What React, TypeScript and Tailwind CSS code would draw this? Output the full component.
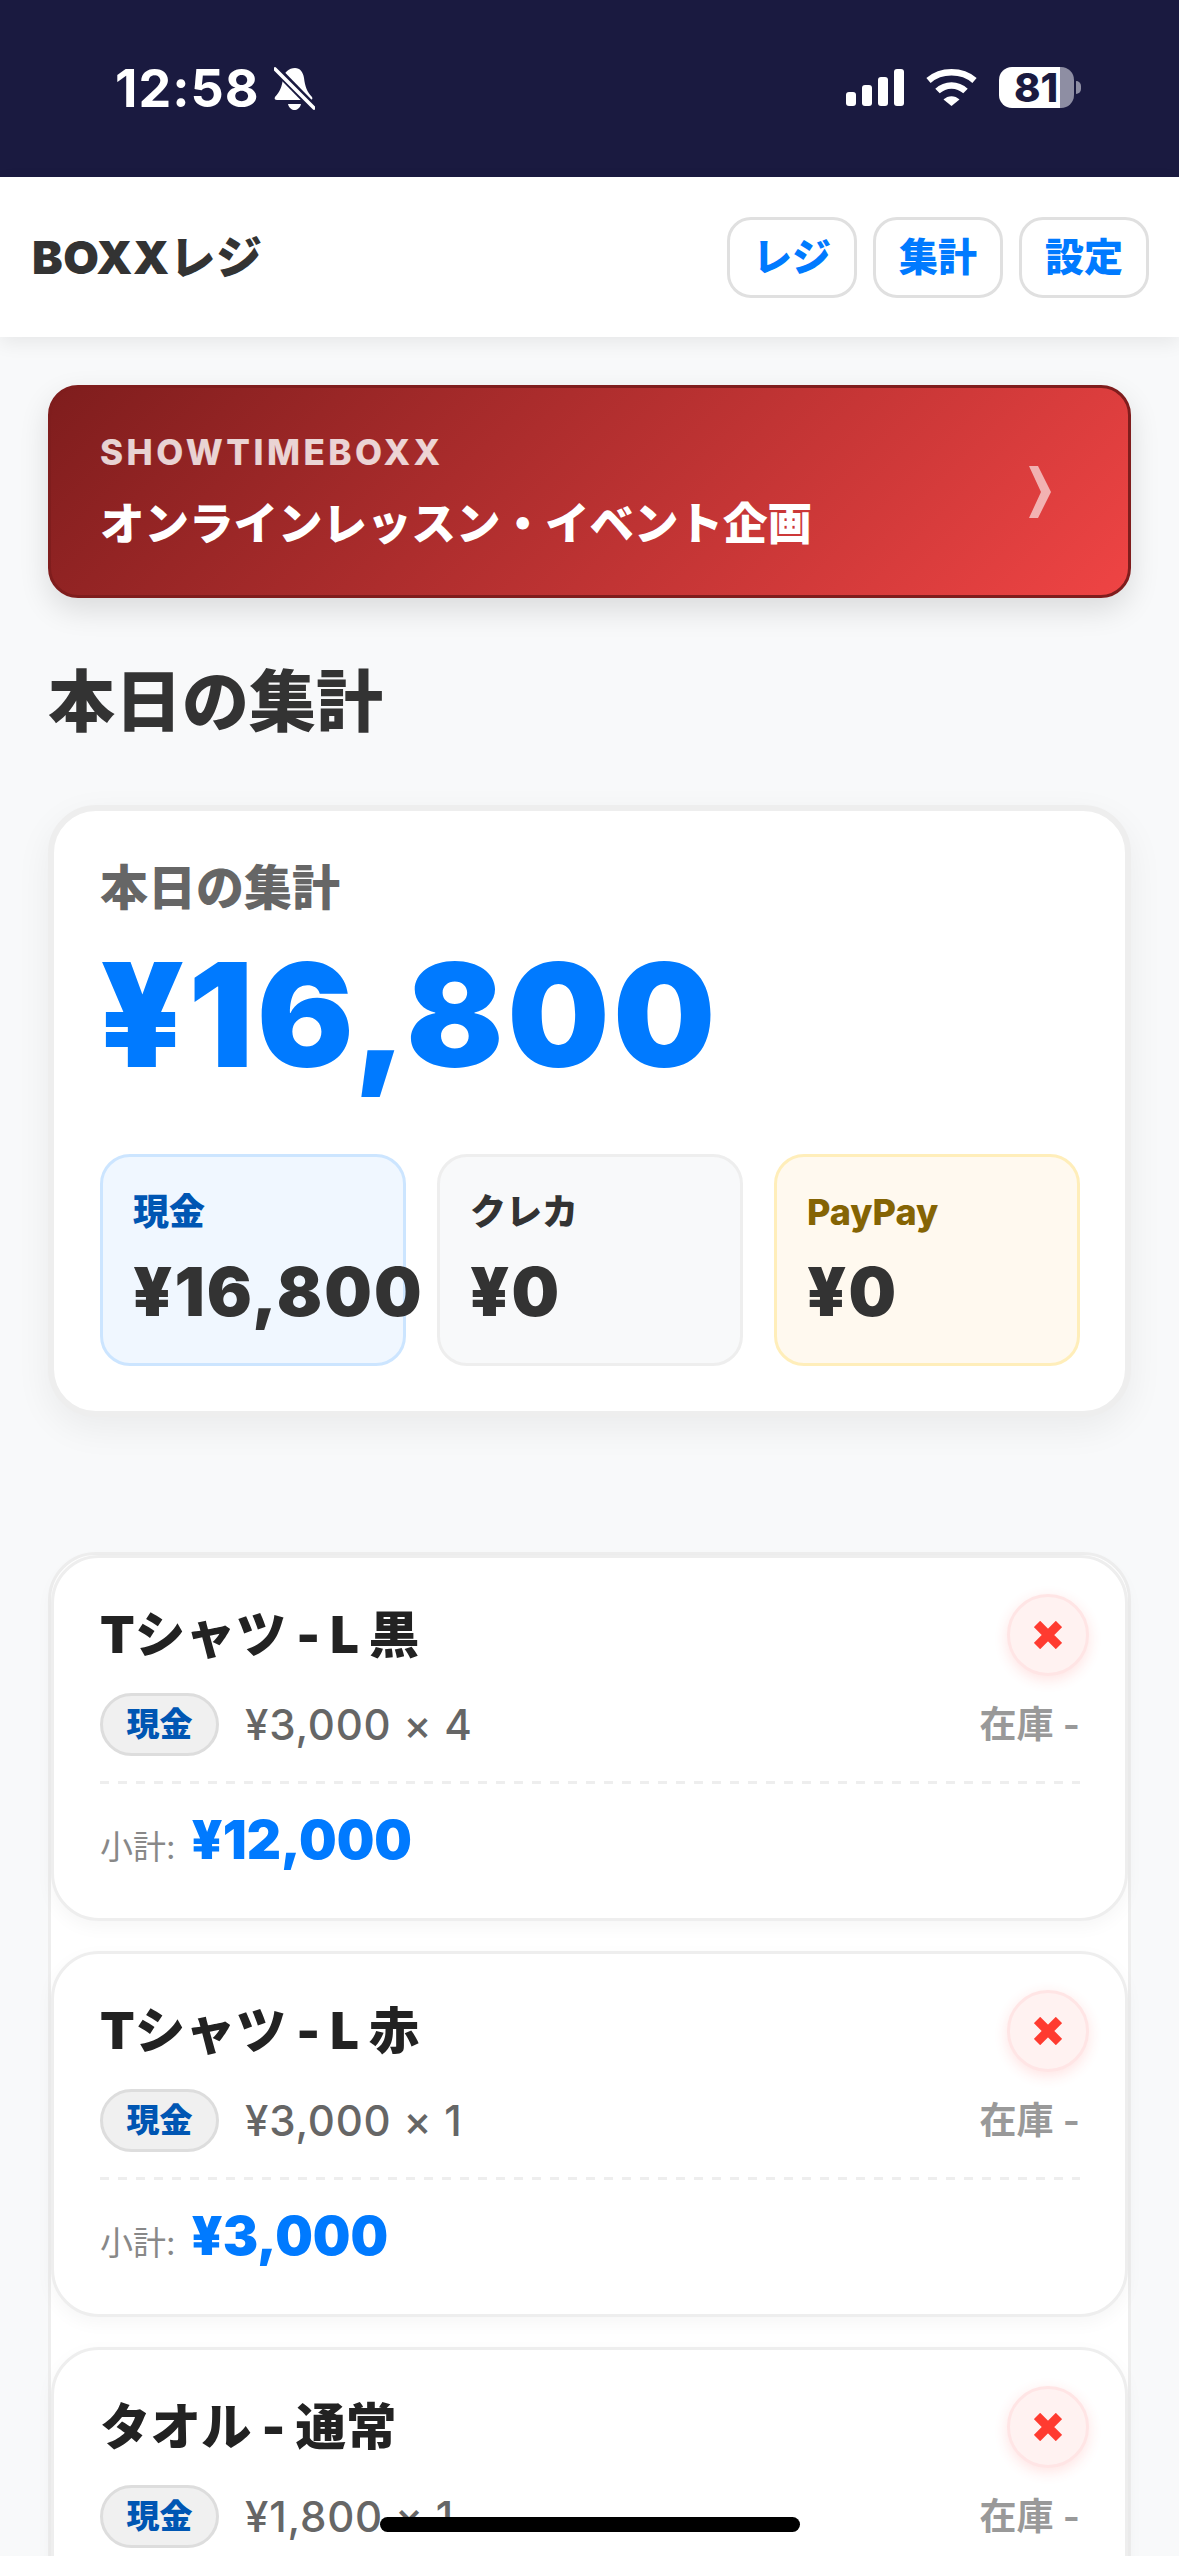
const sales = [
  { id: 1, name: 'Tシャツ - L 黒', detail: '¥3,000 × 4', subtotal: '¥12,000' },
  { id: 2, name: 'Tシャツ - L 赤', detail: '¥3,000 × 1', subtotal: '¥3,000' },
  { id: 3, name: 'タオル - 通常', detail: '¥1,800 × 1', subtotal: '¥1,800' },
];

function BellSlash() {
  return (
    <svg width="41" height="43" viewBox="0 0 41 43" fill="#fff">
      <path d="M21 1C26 1 29 5 30 11C31 19 33 25 38 30C39 32 38 33 36 33L3 33C1 33 0 32 1 30C6 25 8 19 9 12C10 5 15 1 21 1Z" />
      <path d="M14 37H27C26 41 23 43 20.5 43C18 43 15 41 14 37Z" />
      <path d="M-1 -1L43 44" stroke="#1a1a40" strokeWidth="8" />
      <path d="M1 2L40 41" stroke="#fff" strokeWidth="3.6" strokeLinecap="round" />
    </svg>
  );
}

function Signal() {
  return (
    <svg width="58" height="37" viewBox="0 0 58 37" fill="#fff">
      <rect x="0" y="23" width="10" height="14" rx="3" />
      <rect x="16" y="16" width="10" height="21" rx="3" />
      <rect x="32" y="8" width="10" height="29" rx="3" />
      <rect x="48" y="0" width="10" height="37" rx="3" />
    </svg>
  );
}

function Wifi() {
  return (
    <svg width="51" height="37" viewBox="0 0 51 37" fill="none" stroke="#fff" strokeWidth="6.5">
      <path d="M2.5 11.5C15 0.5 36 0.5 48.5 11.5" />
      <path d="M11.5 22C19.5 14.5 31.5 14.5 39.5 22" />
      <path d="M17.5 30.5C22 26 29 26 33.5 30.5L25.5 37Z" fill="#fff" stroke="none" />
    </svg>
  );
}

function Battery() {
  return (
    <div className="flex items-center">
      <div className="h-[41px] w-[75px] rounded-[13px] bg-[linear-gradient(90deg,#ffffff_61px,#8e8ea3_61px)] pl-[15px] text-[40px] font-extrabold leading-[41px] text-[#1a1a40]">
        81
      </div>
      <div className="ml-[2px] h-[13px] w-[5px] rounded-r-full bg-[#8e8ea3]" />
    </div>
  );
}

function StatusBar() {
  return (
    <div className="flex h-[177px] items-start justify-between bg-[#1a1a40] pl-[115px] pr-[98px] pt-[67px] text-white">
      <div className="flex items-center gap-[14px]">
        <span className="text-[52px] font-bold leading-[41px] tracking-[1px]">12:58</span>
        <BellSlash />
      </div>
      <div className="flex items-center gap-[22px]">
        <Signal />
        <Wifi />
        <Battery />
      </div>
    </div>
  );
}

function NavButton({ label }: { label: string }) {
  return (
    <button
      type="button"
      className="flex h-[81px] w-[130px] items-center justify-center rounded-[24px] border-[3px] border-[#e0e0e0] bg-white text-[39px] font-black text-[#007aff]"
    >
      {label}
    </button>
  );
}

function Header() {
  return (
    <header className="relative z-10 flex h-[160px] items-center justify-between bg-white pl-[32px] pr-[30px] shadow-[0_6px_18px_rgba(0,0,0,0.07)]">
      <div className="text-[46px] font-black tracking-[0.5px] text-[#333]">BOXXレジ</div>
      <div className="flex gap-[16px]">
        <NavButton label="レジ" />
        <NavButton label="集計" />
        <NavButton label="設定" />
      </div>
    </header>
  );
}

function Banner() {
  return (
    <div className="mt-[48px] flex h-[213px] items-center justify-between rounded-[30px] border-[3px] border-[#7f1d1d] bg-[linear-gradient(135deg,#7f1d1d,#ef4444)] pl-[49px] pr-[75px] shadow-[0_12px_30px_rgba(0,0,0,0.12)]">
      <div>
        <div className="text-[35px] font-extrabold leading-[44px] tracking-[3.5px] text-white/80">SHOWTIMEBOXX</div>
        <div className="mt-[20px] text-[44.5px] font-black leading-[60px] text-white">オンラインレッスン・イベント企画</div>
      </div>
      <svg width="24" height="52" viewBox="0 0 24 52" fill="#ffffff" fillOpacity="0.6">
        <path d="M0 0H9L22 26L9 52H0L12 26Z" />
      </svg>
    </div>
  );
}

function MethodCard({
  label,
  value,
  box,
  labelColor,
}: {
  label: string;
  value: string;
  box: string;
  labelColor: string;
}) {
  return (
    <div className={`h-[212px] rounded-[30px] border-[3px] pl-[30px] pt-[30px] ${box}`}>
      <div className={`text-[36px] font-extrabold leading-[50px] ${labelColor}`}>{label}</div>
      <div className="mt-[15px] whitespace-nowrap text-[67px] font-black leading-[80px] tracking-[2px] text-[#333]">{value}</div>
    </div>
  );
}

function SummaryCard() {
  return (
    <section className="mt-[63px] h-[612px] rounded-[48px] border-[6px] border-[#eeeeee] bg-white pl-[46px] pr-[45px] pt-[47px] shadow-[0_12px_36px_rgba(0,0,0,0.06)]">
      <div className="text-[48px] font-black leading-[60px] text-[#666]">本日の集計</div>
      <div className="mt-[22px] text-[144px] font-black leading-[150px] tracking-[3.5px] text-[#007aff]">¥16,800</div>
      <div className="mt-[64px] grid grid-cols-3 gap-[31px]">
        <MethodCard label="現金" value="¥16,800" box="border-[#cce5ff] bg-[#f0f7ff]" labelColor="text-[#0056b3]" />
        <MethodCard label="クレカ" value="¥0" box="border-[#eeeeee] bg-[#f8f9fa]" labelColor="text-[#333]" />
        <MethodCard label="PayPay" value="¥0" box="border-[#ffeeba] bg-[#fff9ef]" labelColor="text-[#856404]" />
      </div>
    </section>
  );
}

function SaleItem({ name, detail, subtotal }: { name: string; detail: string; subtotal: string }) {
  return (
    <div className="h-[366px] rounded-[48px] border-[3px] border-[#eeeeee] bg-white pl-[46px] pr-[45px] pt-[36px] shadow-[0_6px_18px_rgba(0,0,0,0.04)]">
      <div className="flex h-[82px] items-center justify-between">
        <div className="text-[50.5px] font-black text-[#222]">{name}</div>
        <button
          type="button"
          className="-mr-[9px] flex h-[82px] w-[82px] items-center justify-center rounded-full border-[3px] border-[#ffe5e5] bg-[#fff2f1] shadow-[0_4px_14px_rgba(255,59,48,0.14)]"
        >
          <svg width="28" height="28" viewBox="0 0 28 28" stroke="#ff3b30" strokeWidth="9">
            <path d="M3 3L25 25M25 3L3 25" />
          </svg>
        </button>
      </div>
      <div className="mt-[17px] flex h-[63px] items-center justify-between">
        <div className="flex items-center gap-[26px]">
          <span className="flex h-[63px] w-[119px] items-center justify-center rounded-full border-[3px] border-[#dddddd] bg-[#f0f0f0] text-[33px] font-extrabold text-[#0056b3]">
            現金
          </span>
          <span className="text-[42px] font-medium tracking-[0.8px] text-[#666]">{detail}</span>
        </div>
        <span className="text-[37px] font-semibold text-[#999]">在庫 -</span>
      </div>
      <div className="mt-[25px] h-[3px] bg-[repeating-linear-gradient(90deg,#eeeeee_0,#eeeeee_9px,transparent_9px,transparent_18px)]" />
      <div className="mt-[17px] flex h-[70px] items-baseline gap-[16px]">
        <span className="text-[33px] font-normal text-[#888]">小計:</span>
        <span className="text-[53px] font-black text-[#007aff]">{subtotal}</span>
      </div>
    </div>
  );
}

export default function App() {
  return (
    <div className="relative h-[2556px] overflow-hidden bg-[#f8f9fa] font-['Inter','Noto_Sans_CJK_JP',sans-serif]">
      <StatusBar />
      <Header />
      <main className="px-[48px]">
        <Banner />
        <h1 className="mt-[64px] text-[67px] font-black leading-[80px] text-[#333]">本日の集計</h1>
        <SummaryCard />
        <div className="mt-[135px] flex flex-col gap-[30px] rounded-[48px] border-[3px] border-[#eeeeee] bg-white">
          {sales.map((s) => (
            <SaleItem key={s.id} name={s.name} detail={s.detail} subtotal={s.subtotal} />
          ))}
        </div>
      </main>
      {/* iOS home indicator, sits over the list */}
      <div className="absolute bottom-[24px] left-[380px] h-[15px] w-[420px] rounded-full bg-black" />
    </div>
  );
}
